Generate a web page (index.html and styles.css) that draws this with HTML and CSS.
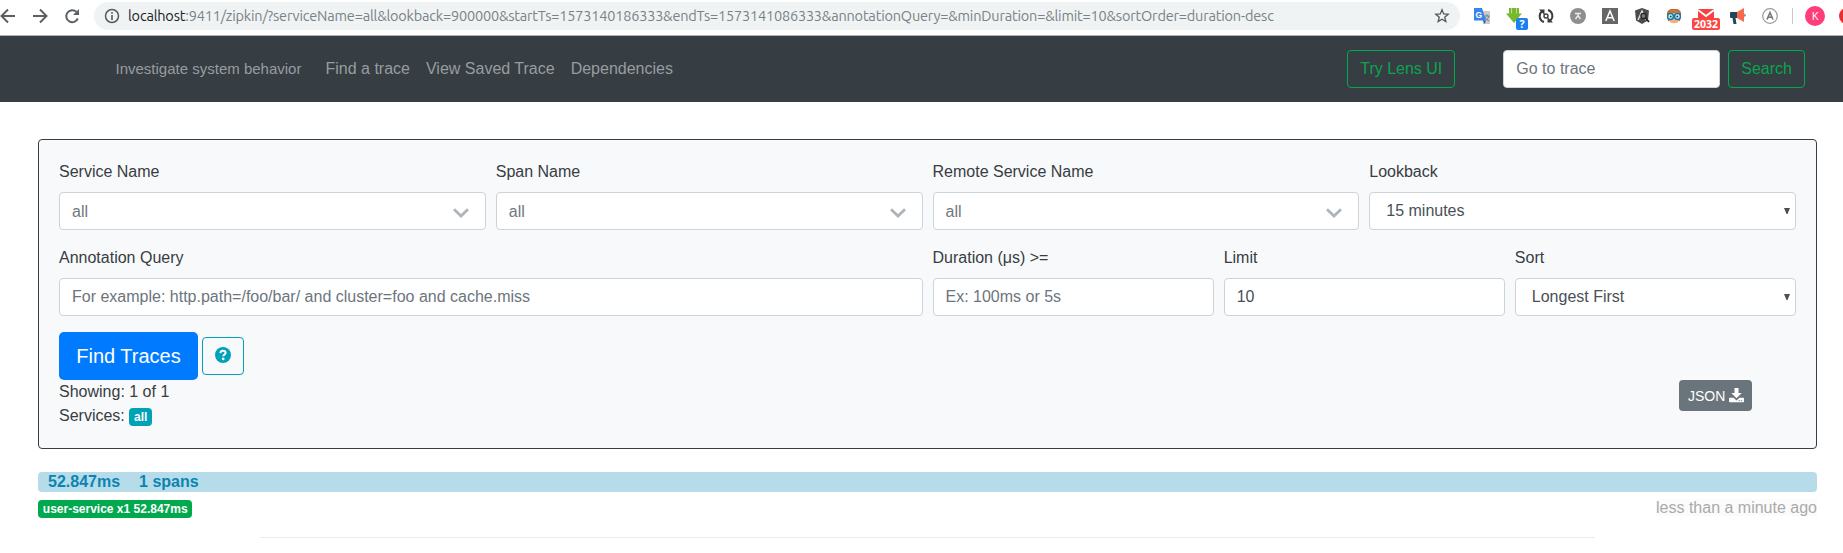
FILE: index.html
```html
<!DOCTYPE html>
<html lang="en">
<head>
<meta charset="utf-8">
<title>Zipkin - Index</title>
<link rel="stylesheet" href="styles.css">
</head>
<body>
<div class="browser">
  <div class="nav-icons">
    <svg width="16" height="16" viewBox="0 0 16 16"><path d="M15 8H2M8 1.500 1.500 8 8 14.500" class="ln"/></svg>
    <svg width="16" height="16" viewBox="0 0 16 16"><path d="M1 8h13M8 1.500 14.500 8 8 14.500" class="ln"/></svg>
    <svg width="16" height="16" viewBox="0 0 16 16"><path d="M13.800 10.500A6 6 0 1 1 12.300 3.800" class="ln"/><path d="M15 1v6H9z" fill="#5b6064"/></svg>
  </div>
  <div class="omnibox">
    <svg width="16" height="16" viewBox="0 0 16 16"><circle cx="8" cy="8" r="6.500" fill="none" stroke="#55595d" stroke-width="1.500"/><path d="M8 7v5M8 4v1.700" stroke="#55595d" stroke-width="1.600"/></svg>
    <div class="url"><b>localhost</b>:9411/zipkin/?serviceName=all&amp;lookback=900000&amp;startTs=1573140186333&amp;endTs=1573141086333&amp;annotationQuery=&amp;minDuration=&amp;limit=10&amp;sortOrder=duration-desc</div>
    <svg class="star" width="16" height="16" viewBox="0 0 16 16"><path d="M8 1.800 9.700 6l4.500.3-3.500 2.900 1.200 4.400L8 11.200l-3.900 2.400 1.200-4.400L1.800 6.300 6.300 6z" fill="none" stroke="#55595d" stroke-width="1.300"/></svg>
  </div>
  <div class="extensions">
    <svg width="16" height="16" viewBox="0 0 16 16"><path d="M7 3h9v13H9z" fill="#c9cbcd"/><path d="M0 0h8l4 12.500H0z" fill="#3b83ec"/><path d="M9 12.500h3L10.500 16z" fill="#2459c4"/><text x="1.500" y="9.500" font-size="8.500" font-weight="bold" fill="#fff">G</text><path d="M10.500 8h5M13 6.500V8m2 0c-.5 2-2 3.500-3 4m-1-3c1 2 2.500 3 4 4" stroke="#6b7f91" fill="none"/></svg>
    <div class="ext"><svg width="16" height="16" viewBox="0 0 16 16"><path d="M3 0h2.500v6H3zM6 0h4v6H6zM10.500 0H13v6h-2.500zM0 5.500h16L8 15z" fill="#78b82c"/></svg><span class="badge-help">?</span></div>
    <svg width="16" height="16" viewBox="0 0 16 16"><path d="M6 14A6.200 6.200 0 0 1 4 3.200M10 2a6.200 6.200 0 0 1 2 10.800" fill="none" stroke="#3c3c3c" stroke-width="1.900"/><path d="M1 1.500h5.500V7zM15 14.500H9.500V9z" fill="#3c3c3c"/><circle cx="8" cy="8" r="2" fill="#fff" stroke="#3c3c3c" stroke-width="1.400"/></svg>
    <svg width="16" height="16" viewBox="0 0 16 16"><circle cx="8" cy="8" r="8" fill="#8e8e8e"/><path d="M5 5.500h6M5.500 11 8 7.500l2.500 3.500M8 5.500v2" fill="none" stroke="#eee" stroke-width="1.300"/></svg>
    <svg width="16" height="16" viewBox="0 0 16 16"><path d="M0 0h16v16H0z" fill="#666"/><path d="M3.800 13 8 3l4.200 10M5.300 9.800h5.400" fill="none" stroke="#fff" stroke-width="1.500"/></svg>
    <svg width="16" height="16" viewBox="0 0 16 16"><path d="m8 0 7 2.500-1 10L8 16l-6-3.500-1-10z" fill="#4c4c4c"/><path d="M4 12 8 3l4 9M5.500 9h5" fill="none" stroke="#ddd" stroke-width="1.500"/><circle cx="9.500" cy="8" r="2.600" fill="#777" stroke="#222" stroke-width="1.200"/><path d="m11.500 10 3.500 4" stroke="#222" stroke-width="1.800"/></svg>
    <svg width="16" height="16" viewBox="0 0 16 16"><path d="M1 8C0 1 5 1 8 1s8 0 7 7l-1 5H2z" fill="#b86b32"/><path d="M3 5h10v8c-2 3-8 3-10 0z" fill="#f0b27c"/><path d="M2 4c4-3 8-3 12 0l-2 2-4-2-4 2z" fill="#c97a3b"/><circle cx="4.500" cy="8.500" r="2.900" fill="#e4f7ff" stroke="#187cab" stroke-width="1.500"/><circle cx="11.500" cy="8.500" r="2.900" fill="#e4f7ff" stroke="#187cab" stroke-width="1.500"/><circle cx="4.700" cy="8.500" r="1" fill="#146"/><circle cx="11.300" cy="8.500" r="1" fill="#146"/></svg>
    <div class="ext"><svg width="16" height="16" viewBox="0 0 16 16"><path d="M0 1h16v10H0z" fill="#f7423f"/><path d="m0 2 8 6 8-6" fill="none" stroke="#fff" stroke-width="1.800"/></svg><span class="badge-mail">2032</span></div>
    <svg width="16" height="16" viewBox="0 0 16 16"><path d="M0 5q0-1 1-1h6v6H5.500l1 6H3.500L2.500 10H1q-1 0-1-1z" fill="#22465a"/><path d="m7 4 7-4v14l-7-4z" fill="#f9694c"/><path d="M14.500 5.500q2 1.500 0 3.500z" fill="#22465a"/></svg>
    <svg width="16" height="16" viewBox="0 0 16 16"><circle cx="8" cy="8" r="7.300" fill="#fff" stroke="#999" stroke-width="1.200"/><path d="M5 11.500 8 4.500l3 7M6 9.300h4" fill="none" stroke="#777" stroke-width="1.600"/></svg>
  </div>
  <span class="divider"></span>
  <span class="avatar">K</span>
  <span class="update-dot"></span>
</div>

<nav class="navbar">
  <span class="tagline">Investigate system behavior</span>
  <a class="nav-link">Find a trace</a>
  <a class="nav-link">View Saved Trace</a>
  <a class="nav-link">Dependencies</a>
  <button class="btn btn-outline lens">Try Lens UI</button>
  <input class="control trace-id" placeholder="Go to trace">
  <button class="btn btn-outline">Search</button>
</nav>

<main class="page">
  <section class="card">
    <div class="row">
      <div class="col q"><label>Service Name</label><div class="control chosen">all<svg width="16" height="10" viewBox="0 0 16 10"><path d="m1 1.300 7 6.700 7-6.700"/></svg></div></div>
      <div class="col q"><label>Span Name</label><div class="control chosen">all<svg width="16" height="10" viewBox="0 0 16 10"><path d="m1 1.300 7 6.700 7-6.700"/></svg></div></div>
      <div class="col q"><label>Remote Service Name</label><div class="control chosen">all<svg width="16" height="10" viewBox="0 0 16 10"><path d="m1 1.300 7 6.700 7-6.700"/></svg></div></div>
      <div class="col q"><label>Lookback</label><div class="control select">15 minutes<svg width="6" height="6" viewBox="0 0 6 6"><path d="M0 0h6L3.500 6h-1z"/></svg></div></div>
    </div>
    <div class="row">
      <div class="col half"><label>Annotation Query</label><input class="control" placeholder="For example: http.path=/foo/bar/ and cluster=foo and cache.miss"></div>
      <div class="col sixth"><label>Duration (μs) &gt;=</label><input class="control" placeholder="Ex: 100ms or 5s"></div>
      <div class="col sixth"><label>Limit</label><input class="control" value="10"></div>
      <div class="col sixth"><label>Sort</label><div class="control select">Longest First<svg width="6" height="6" viewBox="0 0 6 6"><path d="M0 0h6L3.500 6h-1z"/></svg></div></div>
    </div>
    <div class="actions">
      <button class="btn btn-primary">Find Traces</button>
      <button class="btn btn-help"><svg width="16" height="16" viewBox="0 0 16 16"><circle cx="8" cy="8" r="8" fill="#00a2b8"/><path d="M5.400 6.100C5.500 4.400 6.600 3.700 8 3.700c1.500 0 2.600.8 2.600 2.100 0 1.700-2.300 1.700-2.300 3.500" fill="none" stroke="#fff" stroke-width="2"/><circle cx="8.200" cy="11.900" r="1.350" fill="#fff"/></svg></button>
    </div>
    <div class="summary">
      <div>
        <div>Showing: 1 of 1</div>
        <div>Services: <span class="badge info">all</span></div>
      </div>
      <button class="btn btn-json">JSON <svg width="15" height="15" viewBox="0 0 15 15"><path d="M5.500 0h4v5h3.200L7.500 10.300 2.300 5h3.200z"/><path d="M.7 9.800h3.800l3 2.600 3-2.600h3.800q.7 0 .7.700v3q0 .8-.7.800H.7q-.7 0-.7-.8v-3q0-.7.7-.7z"/><path d="M9.500 12.700h1.300m1 0h1.400" stroke="#69747b" stroke-width=".9"/></svg></button>
    </div>
  </section>

  <section class="trace">
    <div class="bar"><span>52.847ms</span><span>1 spans</span></div>
    <div class="meta">
      <span class="badge ok">user-service x1 52.847ms</span>
      <span class="ago">less than a minute ago</span>
    </div>
  </section>
  <hr class="rule">
</main>
</body>
</html>
```
FILE: styles.css
```css
* { box-sizing: border-box; }
body {
  margin: 0;
  height: 553px;
  overflow: hidden;
  background: #fff;
  color: #373d42;
  font: 16px/24px "Liberation Sans", Arial, sans-serif;
}
svg { display: block; flex: none; }

/* browser toolbar */
.browser {
  display: flex;
  align-items: flex-start;
  height: 36px;
  padding-top: 2px;
  border-bottom: 1px solid #b1b2b4;
  overflow: hidden;
}
.browser > * { flex: none; }
.nav-icons { display: flex; gap: 16px; padding-top: 6px; width: 94px; }
.ln { fill: none; stroke: #5b6064; stroke-width: 2; }
.omnibox {
  display: flex;
  align-items: center;
  width: 1366px;
  height: 28px;
  padding: 0 10px;
  border-radius: 14px;
  background: #eff3f4;
}
.url {
  margin-left: 8px;
  color: #7c8185;
  font: 14.500px/28px Ubuntu, "Open Sans", "Noto Sans", sans-serif;
  letter-spacing: -0.190px;
  white-space: nowrap;
}
.url b { color: #202124; font-weight: 400; }
.star { margin-left: auto; }
.extensions { display: flex; gap: 16px; padding: 6px 0 0 14px; }
.extensions text { font-family: "Liberation Sans", sans-serif; }
.ext { position: relative; width: 16px; height: 16px; }
.badge-help, .badge-mail {
  position: absolute;
  top: 10px;
  height: 12px;
  border-radius: 2px;
  color: #fff;
  font: bold 10.500px/12px "Noto Sans", sans-serif;
  text-align: center;
}
.badge-help { left: 10px; width: 12px; background: #1b80f0; }
.badge-mail { left: -6px; width: 28px; background: #fb4744; }
.divider { width: 1px; height: 16px; margin: 6px 0 0 14px; background: #c8c9ca; }
.avatar {
  width: 20px;
  height: 20px;
  margin: 4px 0 0 12px;
  border-radius: 50%;
  background: #ff3d7b;
  color: #fff;
  font: 11px/20px "Open Sans", sans-serif;
  text-align: center;
}
.update-dot { width: 16px; height: 16px; margin: 6px 0 0 14px; border-radius: 50%; background: #ea2b31; }

/* application header */
.navbar {
  display: flex;
  align-items: center;
  height: 66px;
  padding: 0 38px 0 115.500px;
  background: #363d43;
  color: #999c9f;
}
.tagline { width: 202px; font-size: 15px; }
.nav-link { padding: 0 8px; }
.btn {
  border: 1px solid transparent;
  border-radius: 4px;
  background: none;
  font: inherit;
  white-space: nowrap;
}
.btn-outline { height: 38px; padding: 0 12px; border-color: #00a84e; color: #0ca44f; }
.lens { margin-left: auto; }
.control {
  display: flex;
  align-items: center;
  width: 100%;
  height: 38px;
  padding: 0 12px;
  border: 1px solid #ccd3d9;
  border-radius: 4px;
  background: #fff;
  color: #495057;
  font: inherit;
}
.control::placeholder { color: #6c757d; opacity: 1; }
.trace-id { width: 217px; margin: 0 8px 0 48px; }

/* search form */
.page { padding: 37px 26px 0 38px; }
.card {
  height: 310px;
  padding: 20px;
  border: 1px solid #363d43;
  border-radius: 4px;
  background: #f8f9fb;
}
.row { display: flex; margin: 0 -5px 16px; }
.col { padding: 0 5px; }
.q { width: 25%; }
.half { width: 50%; }
.sixth { width: 16.6667%; }
label { display: block; margin-bottom: 8px; }
.chosen { justify-content: space-between; padding: 2px 16px 0 12px; color: #707980; }
.chosen path { fill: none; stroke: #adb5bb; stroke-width: 2.800; }
.chosen svg { margin-top: 1px; }
.select { justify-content: space-between; padding: 0 5px 0 16px; }
.select path { fill: #495057; }
.actions { display: flex; align-items: center; gap: 4px; }
.btn-primary { width: 139px; height: 48px; padding: 0 16px; border-radius: 5px; background: #007bff; color: #fff; font-size: 20px; }
.btn-help { height: 38px; padding: 0 12px; border-color: #00a2b8; }
.btn-help svg { margin-top: -2px; }
.summary { display: flex; justify-content: space-between; align-items: flex-start; padding-right: 44px; }
.badge {
  display: inline-block;
  padding: 3px 4.800px;
  border-radius: 4px;
  color: #fff;
  font-size: 12px;
  font-weight: bold;
  line-height: 12px;
}
.info { background: #00a2b8; }
.ok { background: #00a84e; }
.btn-json {
  display: flex;
  align-items: center;
  gap: 4px;
  width: 73px;
  height: 31px;
  padding: 0 7px 0 8px;
  background: #69747b;
  color: #fff;
  font-size: 14px;
}
.btn-json svg { fill: #fff; }

/* trace list */
.trace { padding-top: 23px; }
.bar {
  display: flex;
  gap: 19px;
  height: 20px;
  padding-left: 10px;
  border-radius: 4px;
  background: #b6dcea;
  color: #0c84b2;
  font-weight: bold;
  line-height: 19px;
}
.meta { display: flex; justify-content: space-between; align-items: flex-start; padding-top: 7px; }
.meta .badge { margin-top: 1px; }
.ago { background: #fbfbfb; color: #aaa; line-height: 17px; }
.rule { width: 1335px; height: 1px; margin: 19px 0 0 222px; border: 0; background: #ebebeb; }
```
